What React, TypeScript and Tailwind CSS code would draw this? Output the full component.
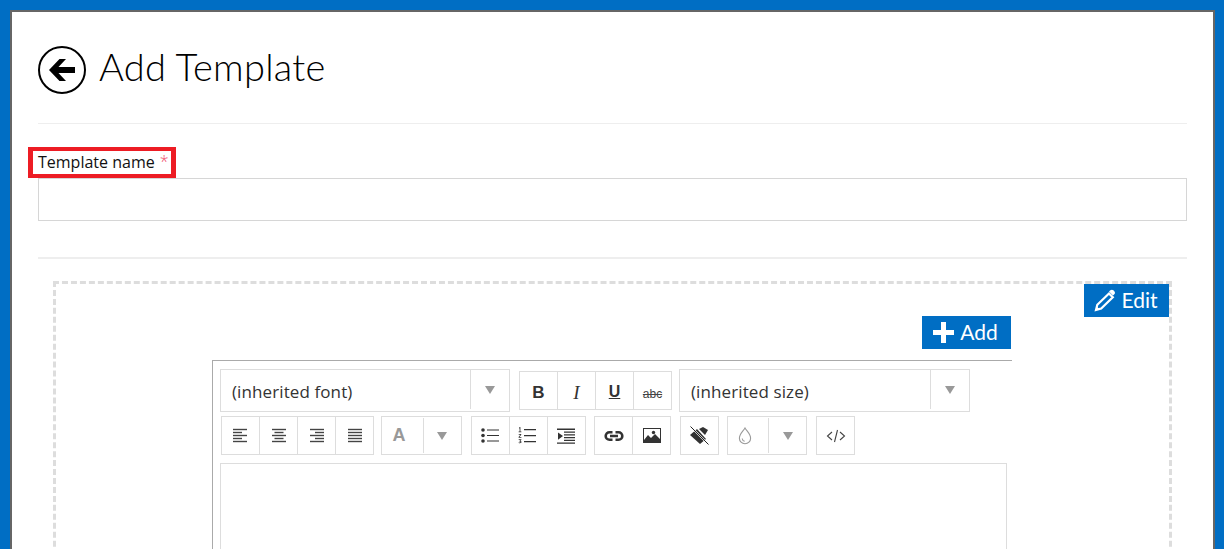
import React from "react";

const Arrow = () => (
  <span className="w-0 h-0 border-x-[5px] border-x-transparent border-t-[8px] border-t-[#999]" />
);

const Cell = ({ children }: { children?: React.ReactNode }) => (
  <div className="w-[38px] h-full flex items-center justify-center border-r border-[#ddd] shrink-0">{children}</div>
);

const Group = ({ children, className = "" }: { children: React.ReactNode; className?: string }) => (
  <div className={`flex h-[39px] border-y border-l border-[#ddd] shrink-0 ${className}`}>{children}</div>
);

const Lines = ({ kind }: { kind: "l" | "c" | "r" | "j" }) => {
  const rows: [number, number][] = {
    l: [[1, 15], [1, 10], [1, 15], [1, 10], [1, 15]],
    c: [[1, 15], [3.5, 12.5], [1, 15], [3.5, 12.5], [1, 15]],
    r: [[1, 15], [6, 15], [1, 15], [6, 15], [1, 15]],
    j: [[1, 15], [1, 15], [1, 15], [1, 15], [1, 15]],
  }[kind] as [number, number][];
  return (
    <svg width="16" height="15" viewBox="0 0 16 15" fill="none" stroke="#444" strokeWidth="1.4">
      {rows.map(([a, b], i) => (
        <path key={i} d={`M${a} ${1.5 + i * 3}H${b}`} />
      ))}
    </svg>
  );
};

const SelectBox = ({ text, w, className = "" }: { text: string; w: string; className?: string }) => (
  <div className={`flex h-[43px] border border-[#ddd] shrink-0 ${w} ${className}`}>
    <div className="flex-1 pl-[11px] pt-[2px] flex items-center text-[17px] tracking-[0.1px] text-[#333]">{text}</div>
    <div className="w-[39px] flex items-center justify-center border-l border-[#ddd] mb-[2px]">
      <Arrow />
    </div>
  </div>
);

export default function App() {
  return (
    <div className="h-[549px] overflow-hidden border-[10px] border-r-[9px] border-b-0 border-[#006ec4] bg-[#006ec4] font-['Open_Sans',sans-serif]">
      <div className="h-[700px] border-2 border-[#666] bg-white pl-[26px] pr-[26px] pt-[34px]">
        <div className="flex items-center h-[48px] gap-[13px] mb-[29px]">
          <div className="w-[48px] h-[48px] rounded-full border-2 border-black flex items-center justify-center shrink-0">
            <svg width="28" height="24" viewBox="0 0 28 24">
              <path d="M11.500 1L1 12l10.500 11h6.500L10.500 15H27V9H10.500L18 1z" fill="#000" />
            </svg>
          </div>
          <h1 className="font-['Lato',sans-serif] font-light text-[38px] tracking-[0.25px] leading-none text-black -mt-[8px]">Add Template</h1>
        </div>
        <div className="h-px bg-[#eee]" />
        <div className="mt-[23px] -ml-[10px] w-[148px] h-[31px] border-[5px] border-b-[4px] border-t-[4px] border-[#ed1c24] pl-[5px] pb-[2px] flex items-center text-[16px] leading-none text-[#111] whitespace-nowrap">
          Template name&nbsp;<span className="text-[#f0506e] font-light ml-px -mt-[2px]">*</span>
        </div>
        <div className="h-[43px] border border-[#d6d6d6]" />
        <div className="mt-[36px] h-[2px] bg-[#eee]" />
        <div className="relative mt-[22px] ml-[15px] w-[1119px] h-[400px] border-[3px] border-dashed border-[#ddd] pt-[32px]">
          <button className="absolute top-0 right-0 w-[85px] h-[33px] pb-[2px] pr-[1px] bg-[#006ec4] text-white flex items-center justify-center gap-[5px] font-['Lato',sans-serif] font-normal text-[21px]">
            <svg width="22" height="24" viewBox="0 0 22 24" fill="none">
              <path d="M15 5.500l3.800 3.800L7.200 20.600l-5.200 1.300 1.300-5.200z" stroke="#fff" strokeWidth="2.200" />
              <path d="M16.300 2.300c.9-.9 2.300-.9 3.100 0l.9.900c.9.900.9 2.300 0 3.100l-1.300 1.300-4-4z" fill="#fff" />
              <path d="M2 22l.8-3.500 2.700 2.700z" fill="#fff" />
            </svg>
            Edit
          </button>
          <div className="ml-[156px] w-[800px]">
            <div className="flex justify-end pr-px">
              <button className="w-[89px] h-[33px] pb-[1px] pr-[2px] bg-[#006ec4] text-white flex items-center justify-center gap-[6px] font-['Lato',sans-serif] font-normal text-[21px]">
                <svg width="21" height="21" viewBox="0 0 21 21" fill="#fff">
                  <path d="M8 0h5v8h8v5h-8v8H8v-8H0V8h8z" />
                </svg>
                Add
              </button>
            </div>
            <div className="mt-[11px] border-t border-l border-[#aaa] pt-[8px] pl-[7px]">
              <div className="flex items-center h-[43px]">
                <SelectBox text="(inherited font)" w="w-[290px]" />
                <Group className="ml-[9px]">
                  <Cell><span className="font-bold text-[17px] text-[#333] font-['Liberation_Sans',sans-serif] pt-[5px]">B</span></Cell>
                  <Cell><span className="italic text-[19px] text-[#333] font-['Liberation_Serif',serif] pt-[5px]">I</span></Cell>
                  <Cell><span className="font-bold text-[16px] underline text-[#333] font-['Liberation_Sans',sans-serif] pt-[3px]">U</span></Cell>
                  <Cell><span className="text-[12px] line-through text-[#444] font-['Liberation_Sans',sans-serif] pt-[7px]">abc</span></Cell>
                </Group>
                <SelectBox text="(inherited size)" w="w-[291px]" className="ml-[7px]" />
              </div>
              <div className="flex mt-[4px] ml-px">
                <Group>
                  <Cell><span className="-ml-px flex"><Lines kind="l" /></span></Cell>
                  <Cell><Lines kind="c" /></Cell>
                  <Cell><Lines kind="r" /></Cell>
                  <Cell><Lines kind="j" /></Cell>
                </Group>
                <Group className="ml-[7px]">
                  <div className="w-[42px] flex items-center justify-center border-r border-[#ddd] my-px pr-[7px]">
                    <span className="font-bold text-[18px] text-[#999] font-['Liberation_Sans',sans-serif]">A</span>
                  </div>
                  <div className="w-[38px] pr-[2px] flex items-center justify-center border-r border-[#ddd]"><Arrow /></div>
                </Group>
                <Group className="ml-[9px]">
                  <Cell>
                    <svg className="-ml-[2px]" width="18" height="15" viewBox="0 0 18 15" fill="#333">
                      <circle cx="2" cy="2" r="1.800" /><circle cx="2" cy="7.500" r="1.800" /><circle cx="2" cy="13" r="1.800" />
                      <path d="M6 1.400h12v1.200H6zM6 6.900h12v1.200H6zM6 12.400h12v1.200H6z" />
                    </svg>
                  </Cell>
                  <Cell>
                    <svg className="-ml-[4px]" width="18" height="17" viewBox="0 0 18 17" fill="#333">
                      <path d="M6 2h12v1.200H6zM6 8h12v1.200H6zM6 14h12v1.200H6z" />
                      <path d="M1 .6L2.400 0v4.600H3.400v.7H.6v-.7h1V1.200L1 1.500zM.7 7h2.600v.6L1.600 10h1.800v.7H.6v-.6l1.700-2.400H.7zM.7 12.200h2.700v.6l-1 1.200c.7.1 1.100.5 1.100 1.100 0 .8-.7 1.200-1.500 1.200-.5 0-1-.1-1.300-.3v-.7c.9.4 1.900.4 1.900-.2 0-.4-.4-.6-1.200-.6v-.5l1-1.100H.7z" />
                    </svg>
                  </Cell>
                  <Cell>
                    <svg className="-ml-[2px]" width="18" height="16" viewBox="0 0 18 16" fill="#333">
                      <path d="M0 .5h18v1.400H0zM7 3.500h11v1.200H7zM7 6.300h11v1.200H7zM7 9h11v1.200H7zM7 11.800h11v1.200H7zM0 14.400h18v1.400H0zM1 4.500l5 3.600-5 3.600z" />
                    </svg>
                  </Cell>
                </Group>
                <Group className="ml-[8px]">
                  <Cell>
                    <svg width="20" height="12" viewBox="0 0 20 12" fill="none" stroke="#333" strokeWidth="2.600">
                      <path d="M8.500 2.200H5.500a3.800 3.800 0 000 7.600h3M11.500 2.200h3a3.800 3.800 0 010 7.600h-3M6 6h8" />
                    </svg>
                  </Cell>
                  <div className="w-[38px] flex items-center justify-center border-r border-[#ddd]">
                    <svg width="18" height="15" viewBox="0 0 18 15">
                      <path d="M0 0h18v15H0z" fill="#333" />
                      <path d="M1 1h16v13H1z" fill="#fff" />
                      <path d="M1 12l4-5 3 3 4-4 5 5v3H1z" fill="#333" />
                      <circle cx="10.500" cy="4.500" r="1.700" fill="#333" />
                    </svg>
                  </div>
                </Group>
                <Group className="ml-[9px]">
                  <Cell>
                    <svg width="19" height="19" viewBox="0 0 19 19">
                      <path d="M9 3l4-2 5 3-3 5z" fill="#333" />
                      <path d="M0 9l7-6 9 10-6 5z" fill="#333" />
                      <path d="M.5.500l18 18" stroke="#fff" strokeWidth="1.800" />
                      <path d="M.5.500l18 18" stroke="#222" strokeWidth="1" />
                    </svg>
                  </Cell>
                </Group>
                <Group className="ml-[8px]">
                  <div className="w-[41px] pr-[6px] flex items-center justify-center border-r border-[#ddd] my-px">
                    <svg width="14" height="18" viewBox="0 0 14 18" fill="none" stroke="#999" strokeWidth="1.100">
                      <path d="M7 1c1.600 3 5.600 5.800 5.600 10.200A5.500 5.500 0 011.400 11.200C1.400 6.800 5.400 4 7 1z" />
                      <path d="M4.200 11.500c.2 1.500 1 2.600 2.500 2.800" />
                    </svg>
                  </div>
                  <div className="w-[38px] flex items-center justify-center border-r border-[#ddd]"><Arrow /></div>
                </Group>
                <Group className="ml-[9px]">
                  <Cell>
                    <svg width="20" height="14" viewBox="0 0 20 14" fill="none" stroke="#444" strokeWidth="1.100">
                      <path d="M6 3L1.500 7 6 11M14 3l4.500 4L14 11M11.500 1L8.500 13" />
                    </svg>
                  </Cell>
                </Group>
              </div>
              <div className="mt-[8px] w-[787px] h-[200px] border border-[#ddd]" />
            </div>
          </div>
        </div>
      </div>
    </div>
  );
}
